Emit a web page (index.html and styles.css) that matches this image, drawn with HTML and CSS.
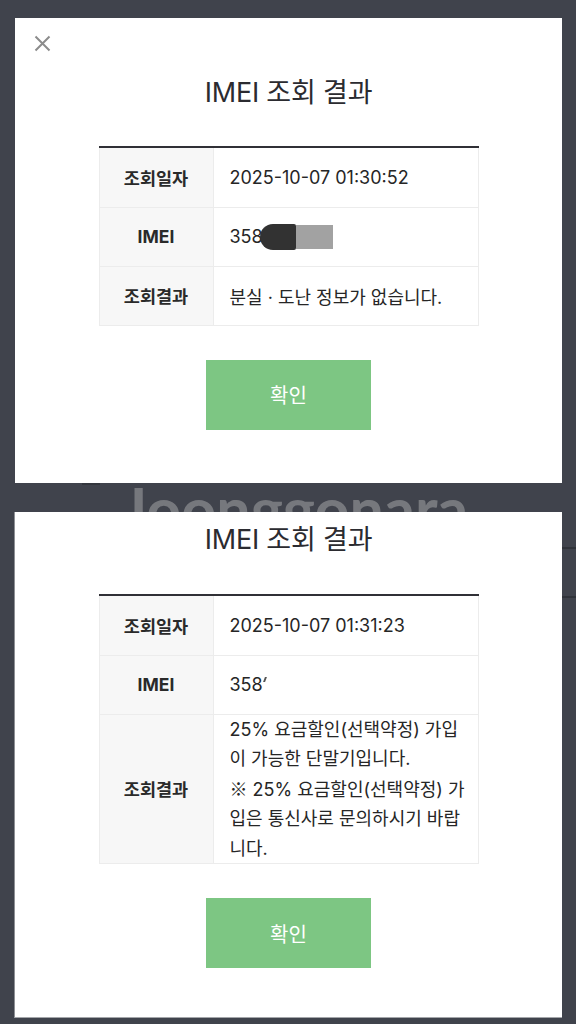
FILE: index.html
```html
<!DOCTYPE html>
<html lang="ko">
<head>
<meta charset="utf-8">
<title>IMEI 조회 결과</title>
<link rel="stylesheet" href="styles.css">
</head>
<body>
<div class="page">
  <section class="modal modal-first">
    <button class="close" aria-label="닫기">
      <svg width="17" height="17" viewBox="0 0 17 17"><path d="M1.5 1.5L15.5 15.5M15.5 1.5L1.5 15.5" stroke="#8c8c8c" stroke-width="2" fill="none"/></svg>
    </button>
    <h2 class="title">IMEI 조회 결과</h2>
    <table class="result">
      <tr><th>조회일자</th><td>2025-10-07 01:30:52</td></tr>
      <tr><th>IMEI</th><td>358<span class="mask-dark"></span><span class="mask-grey"></span></td></tr>
      <tr><th>조회결과</th><td>분실 · 도난 정보가 없습니다.</td></tr>
    </table>
    <div class="actions"><button class="ok">확인</button></div>
  </section>

  <div class="gap">
    <span class="watermark">Joonggonara</span>
  </div>

  <section class="modal modal-second">
    <h2 class="title">IMEI 조회 결과</h2>
    <table class="result">
      <tr><th>조회일자</th><td>2025-10-07 01:31:23</td></tr>
      <tr><th>IMEI</th><td>358<span class="tick"></span></td></tr>
      <tr class="tall"><th>조회결과</th><td class="multi">25% 요금할인(선택약정) 가입<br>이 가능한 단말기입니다.<br><span class="cjk">※</span> 25% 요금할인(선택약정) 가<br>입은 통신사로 문의하시기 바랍<br>니다.</td></tr>
    </table>
    <div class="actions"><button class="ok">확인</button></div>
  </section>
</div>
</body>
</html>
```

FILE: styles.css
```css
html, body {
  margin: 0;
  padding: 0;
  background-color: #40434c;
}
body {
  font-family: "Inter", "Noto Sans CJK KR", sans-serif;
  color: #222;
  width: 576px;
  height: 1024px;
  overflow: hidden;
  background-image:
    linear-gradient(#30333a, #30333a),
    linear-gradient(#30333a, #30333a),
    linear-gradient(#33363d, #33363d);
  background-position: 561px 547px, 561px 596px, 82px 483px;
  background-size: 15px 2px, 15px 2px, 18px 2px;
  background-repeat: no-repeat;
}
.page {
  padding-top: 18px;
  display: flex;
  flex-direction: column;
}
.modal {
  position: relative;
  z-index: 1;
  margin: 0 14px 0 15px;
  background: #fff;
  display: flex;
  flex-direction: column;
  align-items: center;
}
.modal-first {
  height: 465px;
  padding-top: 57px;
  box-sizing: border-box;
}
.modal-second {
  height: 506px;
  padding-top: 10px;
  box-sizing: border-box;
  border-left: 1px solid #8e9095;
  border-bottom: 1px solid #a4a6aa;
  margin-left: 14px;
}
.close {
  position: absolute;
  left: 19px;
  top: 17px;
  width: 17px;
  height: 17px;
  padding: 0;
  border: 0;
  background: none;
  display: flex;
}
.title {
  margin: 0;
  height: 36px;
  line-height: 36px;
  font-size: 27px;
  font-weight: 400;
  letter-spacing: -0.2px;
  color: #2b2b30;
}
.result {
  margin-top: 35px;
  width: 380px;
  border-collapse: collapse;
  border-top: 2px solid #303036;
  font-size: 18px;
}
.modal-second .result {
  margin-top: 36px;
}
.result th,
.result td {
  border: 1px solid #ececec;
  border-top: 0;
  height: 59px;
  padding: 0;
  box-sizing: border-box;
}
.result tr:first-child th,
.result tr:first-child td {
  height: 60px;
}
.result th {
  width: 114px;
  background: #f7f7f7;
  font-weight: 700;
  font-size: 17.5px;
  color: #2a2a2a;
  text-align: center;
}
.result td {
  padding-left: 16px;
  color: #262626;
}
.result tr.tall td,
.result tr.tall th {
  height: 148px;
}
.multi {
  line-height: 29.5px;
  padding-right: 6px;
}
.cjk {
  font-family: "Noto Sans CJK KR", sans-serif;
}
.mask-dark {
  display: inline-block;
  width: 36px;
  height: 26px;
  margin-left: -3px;
  background: #323232;
  border-radius: 13px 2px 2px 13px;
  vertical-align: -7px;
}
.mask-grey {
  display: inline-block;
  width: 37px;
  height: 24px;
  background: #a2a2a2;
  vertical-align: -6px;
}
.tick {
  display: inline-block;
  width: 2px;
  height: 5px;
  margin-left: 1px;
  background: #555;
  vertical-align: 9px;
  transform: skewX(-20deg);
}
.actions {
  margin-top: 34px;
  display: flex;
  justify-content: center;
}
.ok {
  width: 165px;
  height: 70px;
  border: 0;
  background: #7dc683;
  color: #fff;
  font-family: "Noto Sans CJK KR", sans-serif;
  font-size: 20px;
  padding: 0;
}
.gap {
  position: relative;
  height: 29px;
  overflow: hidden;
}
.watermark {
  position: absolute;
  left: 121px;
  top: -4px;
  font-family: "Lato", sans-serif;
  font-weight: 700;
  font-size: 61px;
  line-height: 60px;
  color: #76787d;
  white-space: nowrap;
}
```
